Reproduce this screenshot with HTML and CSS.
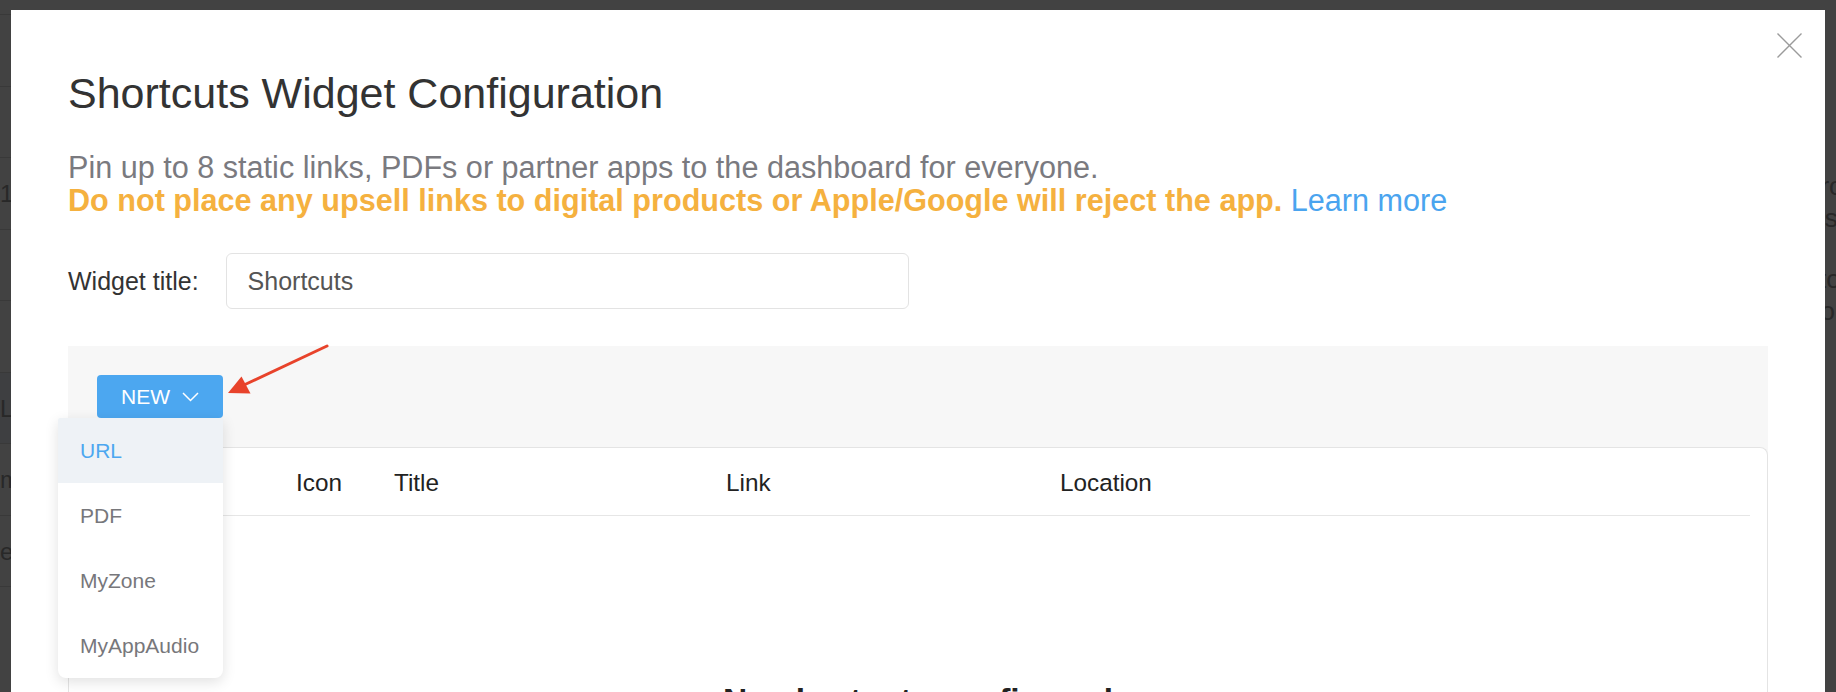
FILE: index.html
```html
<!DOCTYPE html>
<html lang="en">
<head>
    <meta charset="UTF-8">
    <title>Shortcuts Widget Configuration</title>
    <link rel="stylesheet" href="styles.css">
</head>
<body>
    <!-- dashboard behind the dialog -->
    <div class="page">
        <div class="list">
            <div class="row"></div>
            <div class="row"></div>
            <div class="row">1/</div>
            <div class="row"></div>
            <div class="row"></div>
            <div class="row selected">La</div>
            <div class="row">m</div>
            <div class="row">er</div>
            <div class="row"></div>
        </div>
        <div class="notes">
            <p>uro<br>lks</p>
            <p>sto<br>go<br>is</p>
        </div>
    </div>

    <div class="overlay">
        <div class="modal">
            <button class="close" aria-label="Close">
                <svg width="25" height="25" viewBox="0 0 25 25">
                    <path d="M0.5 0.5 L24.5 24.5 M24.5 0.5 L0.5 24.5" stroke="#9b9b9b" stroke-width="1.4" fill="none"/>
                </svg>
            </button>

            <h1>Shortcuts Widget Configuration</h1>
            <p class="intro">
                Pin up to 8 static links, PDFs or partner apps to the dashboard for everyone.<br>
                <strong class="warn">Do not place any upsell links to digital products or Apple/Google will reject the app.</strong>
                <a href="#">Learn more</a>
            </p>

            <div class="field">
                <label for="widgetTitle">Widget title:</label>
                <input type="text" id="widgetTitle" value="Shortcuts">
            </div>

            <div class="panel">
                <div class="toolbar">
                    <div class="new-wrap">
                        <button class="new-btn">NEW
                            <svg width="17" height="10" viewBox="0 0 17 10">
                                <polyline points="1,1 8.5,8.5 16,1" fill="none" stroke="#fff" stroke-width="1.5"/>
                            </svg>
                        </button>
                        <ul class="menu">
                            <li class="active">URL</li>
                            <li>PDF</li>
                            <li>MyZone</li>
                            <li>MyAppAudio</li>
                        </ul>
                    </div>
                </div>
                <div class="card">
                    <div class="thead">
                        <span></span>
                        <span>Icon</span>
                        <span>Title</span>
                        <span>Link</span>
                        <span>Location</span>
                    </div>
                    <div class="empty">No shortcuts configured</div>
                </div>
            </div>
        </div>

        <!-- annotation arrow pointing at the NEW button -->
        <svg class="pointer" width="115" height="62" viewBox="0 0 115 62">
            <line x1="107" y1="8" x2="24" y2="47" stroke="#e8432b" stroke-width="3" stroke-linecap="round"/>
            <polygon points="8,55 21.5,38.5 30.5,55.5" fill="#e8432b"/>
        </svg>
    </div>
</body>
</html>
```

FILE: styles.css
```css
* { box-sizing: border-box; }

html, body {
    margin: 0;
    height: 100%;
    overflow: hidden;
}
body {
    font-family: "Liberation Sans", Arial, Helvetica, sans-serif;
    background: #fff;
}

/* page behind */
.page {
    display: flex;
    justify-content: space-between;
    height: 100vh;
}
.list {
    width: 300px;
    padding-top: 14px;
}
.row {
    height: 71.5px;
    line-height: 71px;
    border-top: 1px solid #ddd;
    font-size: 24px;
    color: #999;
    white-space: nowrap;
}
.row.selected { background: #eef4fb; }
.notes {
    width: 30px;
    overflow: hidden;
    white-space: nowrap;
    padding-top: 170px;
    font-size: 26px;
    line-height: 32px;
    color: #999;
}
.notes p { margin: 0 0 29px 0; }

/* dialog */
.overlay {
    position: fixed;
    inset: 0;
    background: rgba(0, 0, 0, 0.74);
}
.modal {
    position: absolute;
    top: 10px;
    left: 11px;
    right: 11px;
    bottom: 0;
    background: #fff;
    padding: 58px 57px 0 57px;
    overflow: hidden;
}
.close {
    position: absolute;
    top: 23px;
    right: 23px;
    width: 25px;
    height: 25px;
    padding: 0;
    border: none;
    background: none;
    cursor: pointer;
}
.close svg { display: block; }

h1 {
    margin: 0;
    font-size: 43px;
    line-height: 50px;
    font-weight: normal;
    color: #333;
}
.intro {
    margin: 33px 0 0 0;
    font-size: 30.6px;
    line-height: 33px;
    color: #7a7a7f;
}
.warn {
    color: #f5b13f;
    font-weight: bold;
}
.intro a {
    color: #4aa4ef;
    text-decoration: none;
}

.field {
    margin-top: 36px;
    display: flex;
    align-items: center;
    gap: 27px;
}
.field label {
    font-size: 25px;
    color: #333;
}
.field input {
    width: 683px;
    height: 56px;
    padding: 0 21px;
    border: 1px solid #e3e3e3;
    border-radius: 6px;
    font-family: inherit;
    font-size: 25px;
    color: #555;
    outline: none;
}

.panel {
    margin-top: 37px;
    background: #f7f7f7;
}
.toolbar {
    padding: 29px 29px;
}
.new-wrap {
    position: relative;
    display: inline-block;
    vertical-align: top;
}
.new-btn {
    height: 43px;
    padding: 0 24px;
    display: flex;
    align-items: center;
    gap: 12px;
    background: #4ca7f0;
    border: none;
    border-radius: 4px;
    color: #fff;
    font-family: inherit;
    font-size: 21px;
    cursor: pointer;
}
.new-btn svg { display: block; margin-top: 1px; }
.menu {
    position: absolute;
    top: 100%;
    right: 0;
    width: 165px;
    margin: 0;
    padding: 0;
    list-style: none;
    background: #fff;
    border-radius: 2px 0 8px 8px;
    box-shadow: 0 4px 14px rgba(0, 0, 0, 0.12);
    overflow: hidden;
    z-index: 2;
}
.menu li {
    height: 65px;
    line-height: 65px;
    padding-left: 22px;
    font-size: 21px;
    color: #77777b;
    cursor: pointer;
}
.menu li.active {
    background: #eef2f6;
    color: #4ca7f0;
}

.card {
    background: #fff;
    border: 1px solid #e4e4e4;
    border-bottom: none;
    border-radius: 8px 8px 0 0;
    padding: 0 17px;
    height: 400px;
}
.thead {
    display: grid;
    grid-template-columns: 210px 98px 332px 334px 1fr;
    height: 68px;
    line-height: 70px;
    border-bottom: 1px solid #e6e6e6;
    font-size: 24.3px;
    color: #222;
}
.empty {
    padding-top: 165px;
    text-align: center;
    font-size: 33.6px;
    line-height: 40px;
    font-weight: bold;
    color: #222;
}

.pointer {
    position: absolute;
    left: 220px;
    top: 338px;
}
```
